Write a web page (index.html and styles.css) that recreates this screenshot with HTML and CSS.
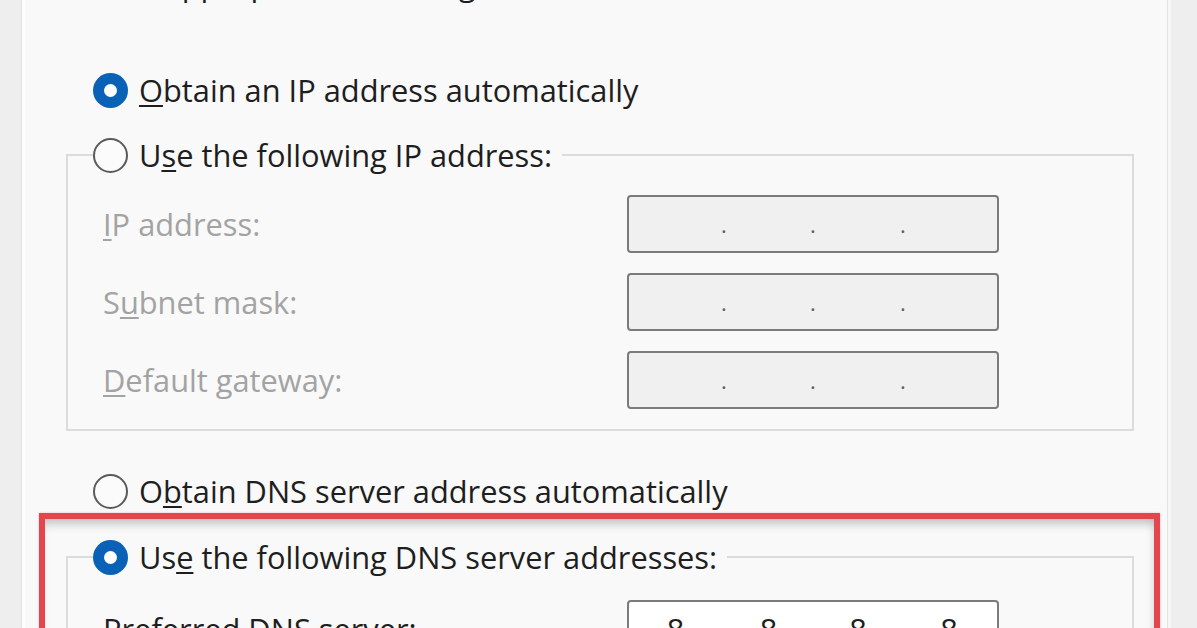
FILE: index.html
```html
<!DOCTYPE html>
<html lang="en">
<head>
<meta charset="utf-8">
<title>Internet Protocol Version 4 (TCP/IPv4) Properties</title>
<link rel="stylesheet" href="styles.css">
</head>
<body>
<div class="screen">
  <div class="strip-left"></div>
  <div class="dialog">
    <p class="intro">for the appropriate IP settings.</p>

    <div class="radio-row row-obtain-ip">
      <span class="radio checked"></span>
      <span class="radio-label"><u>O</u>btain an IP address automatically</span>
    </div>

    <fieldset class="group group-ip">
      <legend class="legend">
        <span class="radio"></span>
        <span class="radio-label">U<u>s</u>e the following IP address:</span>
      </legend>
      <div class="field-row">
        <span class="field-label disabled"><u>I</u>P address:</span>
        <div class="ip-box disabled">
          <span class="seg"></span><span class="dot">.</span><span class="seg"></span><span class="dot">.</span><span class="seg"></span><span class="dot">.</span><span class="seg last"></span>
        </div>
      </div>
      <div class="field-row">
        <span class="field-label disabled">S<u>u</u>bnet mask:</span>
        <div class="ip-box disabled">
          <span class="seg"></span><span class="dot">.</span><span class="seg"></span><span class="dot">.</span><span class="seg"></span><span class="dot">.</span><span class="seg last"></span>
        </div>
      </div>
      <div class="field-row">
        <span class="field-label disabled"><u>D</u>efault gateway:</span>
        <div class="ip-box disabled">
          <span class="seg"></span><span class="dot">.</span><span class="seg"></span><span class="dot">.</span><span class="seg"></span><span class="dot">.</span><span class="seg last"></span>
        </div>
      </div>
    </fieldset>

    <div class="radio-row row-obtain-dns">
      <span class="radio"></span>
      <span class="radio-label">O<u>b</u>tain DNS server address automatically</span>
    </div>

    <fieldset class="group group-dns">
      <legend class="legend">
        <span class="radio checked"></span>
        <span class="radio-label">Us<u>e</u> the following DNS server addresses:</span>
      </legend>
      <div class="field-row">
        <span class="field-label"><u>P</u>referred DNS server:</span>
        <div class="ip-box">
          <span class="seg">8</span><span class="dot">.</span><span class="seg">8</span><span class="dot">.</span><span class="seg">8</span><span class="dot">.</span><span class="seg last">8</span>
        </div>
      </div>
      <div class="field-row">
        <span class="field-label"><u>A</u>lternate DNS server:</span>
        <div class="ip-box">
          <span class="seg">8</span><span class="dot">.</span><span class="seg">8</span><span class="dot">.</span><span class="seg">4</span><span class="dot">.</span><span class="seg last">4</span>
        </div>
      </div>
    </fieldset>

    <div class="highlight"></div>
  </div>
  <div class="strip-right"></div>
</div>
</body>
</html>
```

FILE: styles.css
```css
html, body {
  margin: 0;
  padding: 0;
  background: #eeeeee;
}

body {
  font-family: "Open Sans", "Noto Sans", "Liberation Sans", sans-serif;
  font-size: 30.8px;
  color: #1e1e1e;
}

.screen {
  display: flex;
  width: 1197px;
  height: 628px;
  overflow: hidden;
}

.strip-left {
  flex: none;
  width: 21px;
  background: #eeeeee;
  border-right: 1px solid #e2e2e2;
}

.dialog {
  flex: none;
  position: relative;
  width: 1142px;
  background: #f9f9f9;
  border-left: 3px solid #fdfdfd;
  border-right: 1px solid #e3e3e3;
  display: flex;
  flex-direction: column;
  overflow: hidden;
}

.strip-right {
  flex: 1;
  background: #eeeeee;
  border-left: 3px solid #f6f6f6;
}

.intro {
  margin: -34px 0 0 35px;
  line-height: 36px;
  white-space: nowrap;
}

u {
  text-decoration-thickness: 2px;
  text-underline-offset: 3px;
}

/* radios */
.radio-row {
  display: flex;
  align-items: center;
  height: 40px;
  padding-left: 68px;
}

.row-obtain-ip {
  margin-top: 68px;
}

.row-obtain-dns {
  margin-top: 40px;
}

.radio {
  flex: none;
  box-sizing: border-box;
  width: 35px;
  height: 35px;
  border-radius: 50%;
  border: 2.5px solid #5a5a5a;
  background: #fbfbfb;
  margin-right: 11px;
  display: flex;
  align-items: center;
  justify-content: center;
}

.radio.checked {
  border: none;
  background: #0a62b6;
}

.radio.checked::after {
  content: "";
  width: 13px;
  height: 13px;
  border-radius: 50%;
  background: #ffffff;
}

.radio-label {
  white-space: nowrap;
  line-height: 40px;
}

/* group boxes */
.group {
  flex: none;
  box-sizing: border-box;
  width: 1068px;
  margin: 0 0 0 41px;
  padding: 20px 0 20px 0;
  border: 2px solid #dcdcdc;
  border-radius: 0;
  min-inline-size: 0;
}

.group-ip {
  margin-top: 25px;
}

.group-dns {
  margin-top: 26px;
  padding-top: 23px;
}

.legend {
  display: flex;
  align-items: center;
  height: 40px;
  padding: 0 10px 0 0;
  margin-left: 25px;
}

.field-row {
  display: grid;
  grid-template-columns: 524px 372px;
  align-items: center;
  height: 58px;
  padding-left: 35px;
}

.field-row + .field-row {
  margin-top: 20px;
}

.field-label {
  white-space: nowrap;
  color: #1e1e1e;
}

.field-label.disabled {
  color: #a3a3a3;
}

.ip-box {
  box-sizing: border-box;
  height: 58px;
  border: 2.5px solid #7b7b7b;
  border-radius: 4px;
  background: #ffffff;
  display: grid;
  grid-template-columns: 93px 4px 85px 4px 86px 4px 1fr;
  align-items: center;
  color: #1e1e1e;
}

.ip-box.disabled {
  background: #f0f0f0;
  color: #5e5e5e;
}

.seg {
  text-align: center;
  line-height: 40px;
}

.seg.last {
  padding-right: 4px;
}

.dot {
  text-align: center;
  line-height: 40px;
  font-size: 22px;
  display: flex;
  justify-content: center;
  align-items: flex-end;
  height: 40px;
  overflow: visible;
}

/* red annotation overlay */
.highlight {
  position: absolute;
  left: 14px;
  top: 513px;
  width: 1121px;
  height: 220px;
  box-sizing: border-box;
  border: 6px solid #e3464d;
  box-shadow: inset 0 10px 10px -5px rgba(0, 0, 0, 0.22),
              inset -7px 0 8px -6px rgba(0, 0, 0, 0.1),
              0 0 2px rgba(227, 70, 77, 0.35);
  pointer-events: none;
}
```
